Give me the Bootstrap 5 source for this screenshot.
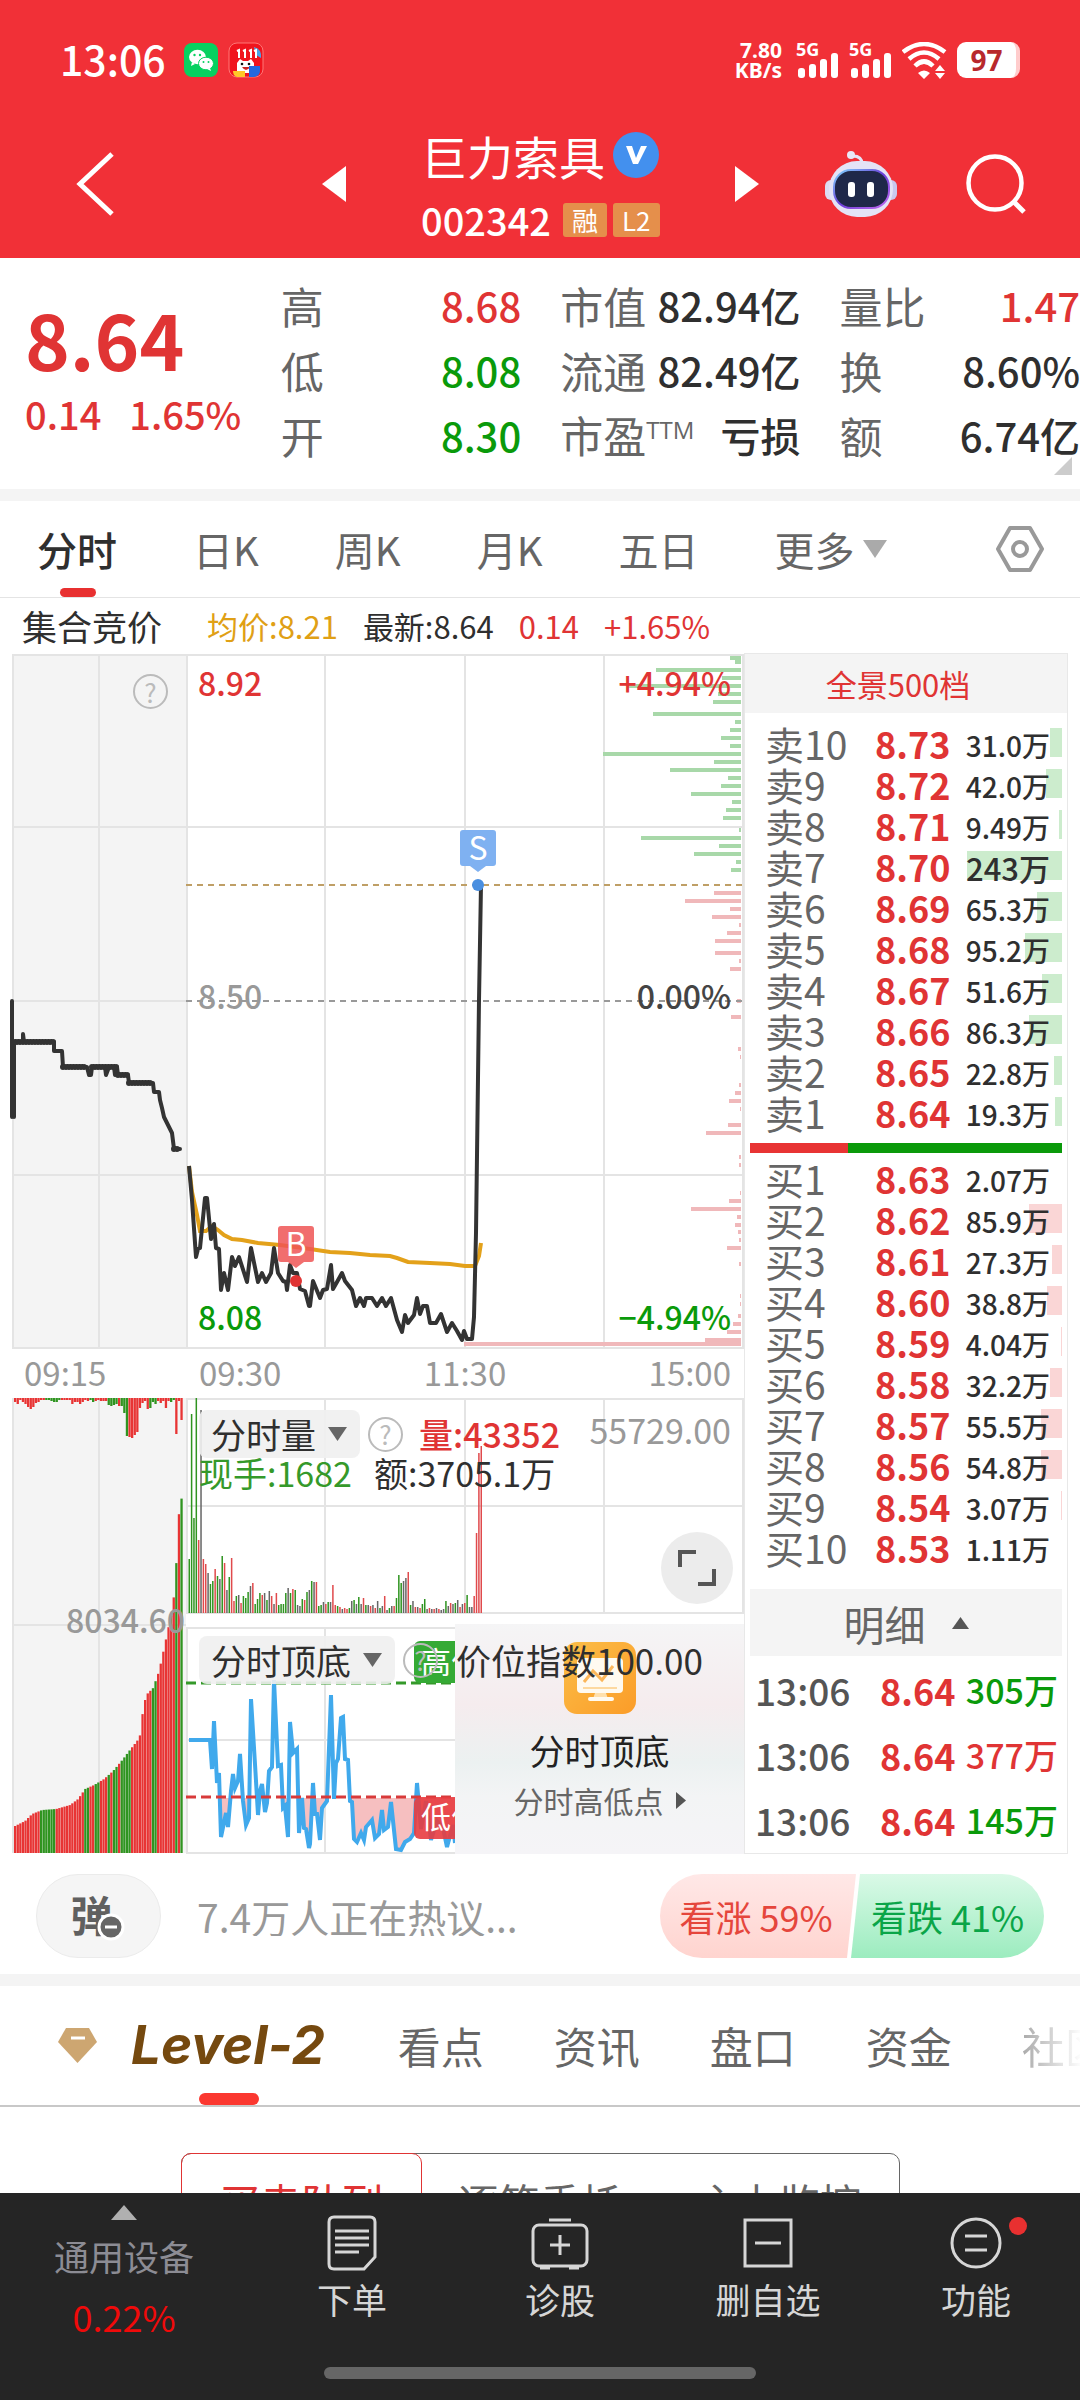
<!DOCTYPE html>
<html lang="zh-CN">
<head>
<meta charset="utf-8">
<meta name="viewport" content="width=device-width, initial-scale=1">
<title>巨力索具 002342</title>
<link rel="stylesheet" href="https://cdn.jsdelivr.net/npm/bootstrap@5.3.0/dist/css/bootstrap.min.css">
<style>
:root { --up:#e03434; --down:#0a9a0a; --ink:#2f2f2f; --mute:#666; --soft:#999; --panel:#f4f4f4; --rule:#e9e9e9; }
body { font-family:"Noto Sans CJK SC","Noto Sans",sans-serif; font-size:34px; line-height:40px; color:var(--ink); background:#fff; }
svg { display:block; flex:none; }
button { background:none; border:0; padding:0; color:inherit; }
a { color:inherit; text-decoration:none; }
.up { color:var(--up); } .down { color:var(--down); } .mute { color:var(--mute); } .soft { color:var(--soft); }
.band { height:12px; background:var(--panel); }

.top-red { background:#f13037; color:#fff; height:258px; }
.statusbar { height:120px; padding:0 60px; gap:10px; }
.clock { font-size:41px; font-weight:500; }
.net-rate { font:700 21px/20px "Noto Sans",sans-serif; text-align:right; margin-right:4px; }
.cell-signal { overflow:visible; }
.cell-signal text { font:700 18px "Noto Sans",sans-serif; }
.battery { width:63px; height:36px; border-radius:9px; background:#fff; color:#b8282c; font:700 28px/36px "Noto Sans",sans-serif; text-align:center; border-right:4px solid #fcc; }
.titlebar { height:138px; padding:0 0 10px 76px; }
.to-prev { margin-left:208px; } .title-block { margin-left:75px; width:241px; white-space:nowrap; } .to-next { margin-left:73px; } .to-bot { margin-left:66px; } .to-find { margin-left:69px; }
.stock-name { font-size:46px; line-height:54px; }
.stock-code { font-size:38px; line-height:40px; font-weight:500; margin-top:18px; }
.tag { background:#e58f4b; border-radius:3px; font-size:26px; font-weight:400; line-height:33px; height:34px; padding:0 9px; }
.tag-first { margin-left:12px; margin-right:6px; }

.quote { height:231px; padding-top:14px; }
.quote-main { flex:0 0 26%; padding-left:25px; }
.last-price { font-size:76px; line-height:92px; font-weight:700; margin-top:20px; }
.chg { font-size:38px; line-height:60px; gap:28px; font-weight:500; }
.stats { gap:39px; }
.stat { height:65px; }
.stat dt { font-size:43px; font-weight:400; color:var(--mute); white-space:nowrap; }
.stat dd { font-size:40px; font-weight:500; margin:0; white-space:nowrap; }
.stat sup { font:400 24px/24px "Open Sans",sans-serif; top:-14px; }
.corner { right:8px; bottom:14px; }

.periods { height:97px; padding:0 36px 0 37px; gap:76px; font-size:40px; color:var(--mute); border-bottom:1px solid #e4e4e4; }
.periods button { height:96px; position:relative; }
.periods .on { color:var(--ink); font-weight:500; }
.periods .on::after { content:""; position:absolute; left:23px; bottom:0; width:36px; height:9px; border-radius:5px; background:#e83030; }
.legend-row { height:56px; padding-left:22px; font-size:31px; gap:25px; }
.legend-row .auction { font-size:35px; margin-right:20px; }

.plots svg { width:100%; height:auto; }
.plots text { font-family:"Noto Sans CJK SC","Noto Sans",sans-serif; font-size:32px; }
.axis { height:49px; font-size:33px; color:var(--soft); }
.axis span { width:25%; line-height:44px; margin-bottom:3px; }
.inset-start { padding-left:13px; } .inset-end { padding-right:13px; }
.aux-left { flex:186 0 0; } .aux-right { flex:558 0 0; min-width:0; }
.grid-line { stroke:#e4e4e4; stroke-width:2; fill:none; }
.tool-row { left:13px; top:12px; right:13px; height:48px; }
.pick { background:rgba(240,240,240,.9); border-radius:8px; height:48px; padding:0 13px 0 12px; font-size:35px; gap:12px; }
.help { width:35px; height:35px; border:2px solid #bbb; border-radius:50%; color:#bbb; font-size:26px; line-height:30px; text-align:center; }
.help-auction { right:558px; top:20px; margin-right:18px; }
.detail-row { left:13px; top:55px; gap:22px; }
.expand { right:11px; bottom:10px; width:72px; height:72px; border-radius:50%; background:#ececec; }
.promo { right:0; top:2px; width:289px; bottom:0; padding-top:18px; color:#222; background:linear-gradient(#f5f5f6,#f5ecee 35%,#ecf1f1 60%,#f3f4f5 75%,#f5f4f7); }
.promo b { font-size:35px; line-height:42px; margin-top:15px; font-weight:400; }
.promo small { font-size:30px; line-height:40px; margin-top:9px; gap:12px; color:#666; }
.index-name { left:270px; top:14px; font-size:35px; z-index:2; }

.book { flex:0 0 324px; margin-right:12px; border:1px solid #e8e8e8; margin-top:-1px; }
.depth-link { height:59px; background:var(--panel); font-size:31px; width:100%; padding-right:16px; }
.ladder { width:100%; table-layout:fixed; border-collapse:collapse; }
.ladder td, .ladder th { padding:0; height:41px; line-height:38px; white-space:nowrap; }
.ladder th { width:130px; padding-left:20px; font-size:39px; font-weight:400; color:var(--mute); }
.ladder .px { width:90px; font-size:36px; font-weight:700; color:var(--up); }
.ladder .vol { position:relative; font-size:28px; line-height:34px; font-weight:500; text-align:right; padding-right:17px; padding-top:4px; }
.ladder .vol.short-num { font-size:31px; }
.ladder .vol span { position:relative; }
.ladder .fillbar { position:absolute; right:5px; top:6px; height:29px; background:#cceccd; }
.ladder.bids .fillbar { background:#fad6d6; }
.asks { margin-top:9px; }
.balance { height:10px; margin:11px 5px 4px 5px; }
.tick-toggle { height:67px; margin:22px 5px 0; background:var(--panel); font-size:41px; color:var(--mute); gap:26px; }
.ticks { width:100%; table-layout:fixed; }
.ticks td { height:65px; padding:3px 0 0; font-size:37px; white-space:nowrap; }
.ticks td:nth-child(1) { width:135px; padding-left:10px; color:#555; font-weight:500; }
.ticks td:nth-child(2) { width:80px; color:var(--up); font-size:36px; font-weight:700; }
.ticks td:nth-child(3) { font-size:34px; font-weight:500; text-align:right; padding-right:9px; }

.talk { height:120px; padding:4px 36px 0; }
.danmu { width:125px; height:84px; border-radius:42px; background:#f5f5f5; border:1px solid #ebebeb; font-size:42px; font-weight:700; color:#606060; position:relative; padding:0 14px 4px 0; }
.danmu svg { position:absolute; left:60px; top:38px; }
.talk-box { font-size:39px; color:#999; border:0; background:none; margin-left:36px; width:400px; min-width:0; padding:0; outline:0; }
.talk-box::placeholder { color:#999; opacity:1; }
.vote { height:84px; width:384px; font-size:36px; }
.vote button { position:relative; height:84px; white-space:nowrap; }
.bull { flex:194 0 0; color:#e5463c; background:linear-gradient(#ffe8e7,#ffd4cf); border-radius:42px 0 0 42px; clip-path:polygon(0 0,100% 0,calc(100% - 9px) 100%,0 100%); }
.vote .bull { padding-right:4px; }
.bear { flex:195 0 0; margin-left:-5px; color:#0aa548; background:linear-gradient(#daf9e7,#9cecbf); border-radius:0 42px 42px 0; clip-path:polygon(9px 0,100% 0,100% 100%,0 100%); }

.sections { height:121px; padding-left:57px; border-bottom:2px solid #c8c8c8; font-size:43px; color:var(--mute); overflow:hidden; white-space:nowrap; }
.sections a { margin-right:70px; line-height:117px; }
.sections .lv2 { font:italic 700 53px/119px Inter,sans-serif; color:#75490f; position:relative; margin-left:33px; margin-right:73px; }
.sections .lv2::after { content:""; position:absolute; left:68px; bottom:0; width:60px; height:12px; border-radius:6px; background:#fb3830; }
.sections .fade-tail { color:transparent; background:linear-gradient(90deg,#aaa,#fff 60px); background-clip:text; -webkit-background-clip:text; margin:0; }
.segments { width:719px; height:96px; margin:46px auto 0; border:1px solid #666; border-radius:10px; font-size:41px; color:var(--mute); }
.segments button { flex:1; }
.segments .on { color:var(--up); border:1px solid var(--up); border-radius:10px; margin:-1px; }

.dock { height:207px; background:#252525; color:#d6d6d6; font-size:35px; }
.dock-index { flex:248 0 0; color:#8c8c94; padding-top:12px; }
.dock-index b { font-weight:400; font-size:36px; color:#f00a0a; margin-top:20px; }
.dock-item { flex:208 0 0; padding-top:22px; position:relative; }
.dock-item span { margin-top:8px; }
.dot { position:absolute; right:53px; top:24px; width:18px; height:18px; border-radius:50%; background:#e83030; }
.home-line { position:absolute; left:30%; right:30%; bottom:21px; height:12px; border-radius:6px; background:#666; }
</style>
<script src="https://cdn.jsdelivr.net/npm/bootstrap@5.3.0/dist/js/bootstrap.bundle.min.js"></script>
</head>
<body>
<header class="top-red">
  <div class="statusbar d-flex align-items-center">
    <span class="clock me-2 pb-1">13:06</span>
    <svg width="34" height="34" viewBox="0 0 34 34"><rect width="34" height="34" rx="8" fill="#07d160"/><ellipse cx="13.500" cy="14" rx="8.500" ry="7.200" fill="#fff"/><path d="M8 19l-1 4 4-2z" fill="#fff"/><ellipse cx="22" cy="20.500" rx="7.500" ry="6.300" fill="#fff" stroke="#07d160"/><path d="M26 25l1 3-4-2z" fill="#fff"/><g fill="#07d160"><circle cx="10.500" cy="12" r="1.200"/><circle cx="16" cy="12" r="1.200"/><circle cx="19.500" cy="19" r="1"/><circle cx="24.500" cy="19" r="1"/></g></svg>
    <svg width="36" height="36" viewBox="-1 -1 36 36"><rect width="34" height="34" rx="8" fill="#f0141e" stroke="#f77"/><path d="M25 4q8 2 7 11l-5-3z" fill="#48a4e8"/><path d="M8 8l2-1v8M14 8l2-1v8M20 8l2-1v8M25 8l2-1v8" stroke="#fff" stroke-width="2" fill="none"/><path d="M8 30V20l3-4 3 2h5l3-2 3 4v10z" fill="#fff"/><circle cx="13" cy="21" r="1.300" fill="#111"/><circle cx="20" cy="21" r="1.300" fill="#111"/><path d="M13 24h8q-4 6-8 0z" fill="#c22"/><path d="M4 28h12v6H8q-4-1-4-6z" fill="#ffc928"/><path d="M20 23h11v5q0 5-6 6h-5z" fill="#2368e0"/></svg>
    <div class="ms-auto net-rate">7.80<br>KB/s</div>
    <svg class="cell-signal" width="43" height="36" viewBox="0 0 43 36" fill="#fff"><text x="0" y="14">5G</text><rect x="2" y="26" width="7" height="10" rx="3"/><rect x="13" y="22" width="7" height="14" rx="3"/><rect x="24" y="17" width="7" height="19" rx="3"/><rect x="35" y="11" width="7" height="25" rx="3"/></svg>
    <svg class="cell-signal" width="43" height="36" viewBox="0 0 43 36" fill="#fff"><text x="0" y="14">5G</text><rect x="2" y="26" width="7" height="10" rx="3"/><rect x="13" y="22" width="7" height="14" rx="3"/><rect x="24" y="17" width="7" height="19" rx="3"/><rect x="35" y="11" width="7" height="25" rx="3"/></svg>
    <svg width="45" height="37" viewBox="0 0 45 37"><g fill="none" stroke="#fff" stroke-width="4.500"><path d="M1 10Q22-6 43 10"/><path d="M7 17Q22 4 37 17"/><path d="M13 24Q22 15 31 24"/></g><path d="M16 31q6-5 12 0l-6 6zM33 29l5-6 5 6zM33 31h10l-5 6z" fill="#fff"/></svg>
    <div class="battery">97</div>
  </div>
  <div class="titlebar d-flex align-items-center">
    <button type="button" aria-label="返回"><svg width="38" height="66" viewBox="0 0 38 66"><path d="M36 3L4 33l32 30" fill="none" stroke="#fff" stroke-width="5"/></svg></button>
    <button type="button" class="to-prev" aria-label="上一只"><svg width="24" height="36" viewBox="0 0 24 36"><path d="M24 0v36L0 18z" fill="#fff"/></svg></button>
    <div class="title-block">
      <div class="d-flex align-items-center stock-name">巨力索具<svg class="ms-2" width="46" height="46" viewBox="0 0 46 46"><circle cx="23" cy="23" r="23" fill="#4390ee"/><path d="M13 14l6 0 4 12 5-12h6l-9 18h-5z" fill="#fff"/></svg></div>
      <div class="d-flex align-items-center stock-code">002342<span class="tag tag-first">融</span><span class="tag">L2</span></div>
    </div>
    <button type="button" class="to-next" aria-label="下一只"><svg width="24" height="36" viewBox="0 0 24 36"><path d="M0 0v36l24-18z" fill="#fff"/></svg></button>
    <button type="button" class="to-bot" aria-label="智能助手"><svg width="72" height="66" viewBox="0 0 72 66"><defs><linearGradient id="face" x1="0" y1="0" x2="1" y2="1"><stop offset="0" stop-color="#7fd8ff"/><stop offset=".5" stop-color="#6b3fd8"/><stop offset="1" stop-color="#c46af0"/></linearGradient></defs><path d="M37 13Q37 5 28 5" fill="none" stroke="#e6e4f6" stroke-width="3"/><circle cx="26" cy="4" r="4" fill="#e9e8f7"/><rect y="29" width="16" height="20" rx="6" fill="#dcdcf2"/><rect x="56" y="29" width="16" height="20" rx="6" fill="#c9c8ee"/><rect x="4" y="10" width="64" height="56" rx="28" fill="#e4e3f6"/><rect x="9" y="19" width="55" height="38" rx="17" fill="#1f2849" stroke="url(#face)" stroke-width="2"/><rect x="23" y="31" width="7" height="15" rx="3" fill="#fff"/><rect x="42" y="31" width="7" height="15" rx="3" fill="#fff"/></svg></button>
    <button type="button" class="to-find" aria-label="搜索"><svg width="60" height="60" viewBox="0 0 60 60"><circle cx="29" cy="29" r="26.500" fill="none" stroke="#fff" stroke-width="4.500"/><path d="M47 47l11 11" stroke="#fff" stroke-width="5"/></svg></button>
  </div>
</header>

<section class="quote d-flex position-relative">
  <div class="quote-main">
    <div class="last-price up">8.64</div>
    <div class="chg up d-flex"><span>0.14</span><span>1.65%</span></div>
  </div>
  <div class="stats d-flex flex-grow-1">
    <dl class="flex-fill w-100 m-0">
      <div class="stat d-flex align-items-center justify-content-between"><dt>高</dt><dd class="up">8.68</dd></div>
      <div class="stat d-flex align-items-center justify-content-between"><dt>低</dt><dd class="down">8.08</dd></div>
      <div class="stat d-flex align-items-center justify-content-between"><dt>开</dt><dd class="down">8.30</dd></div>
    </dl>
    <dl class="flex-fill w-100 m-0">
      <div class="stat d-flex align-items-center justify-content-between"><dt>市值</dt><dd>82.94亿</dd></div>
      <div class="stat d-flex align-items-center justify-content-between"><dt>流通</dt><dd>82.49亿</dd></div>
      <div class="stat d-flex align-items-center justify-content-between"><dt>市盈<sup>TTM</sup></dt><dd>亏损</dd></div>
    </dl>
    <dl class="flex-fill w-100 m-0">
      <div class="stat d-flex align-items-center justify-content-between"><dt>量比</dt><dd class="up">1.47</dd></div>
      <div class="stat d-flex align-items-center justify-content-between"><dt>换</dt><dd>8.60%</dd></div>
      <div class="stat d-flex align-items-center justify-content-between"><dt>额</dt><dd>6.74亿</dd></div>
    </dl>
  </div>
  <svg class="corner position-absolute" width="18" height="18"><path d="M18 0v18H0z" fill="#ccc"/></svg>
</section>
<div class="band"></div>

<nav class="periods d-flex align-items-center">
  <button type="button" class="on">分时</button><button type="button">日K</button><button type="button">周K</button><button type="button">月K</button><button type="button">五日</button>
  <button type="button" class="d-flex align-items-center gap-2">更多<svg width="24" height="20"><path d="M0 1h24L12 19z" fill="#aaa"/></svg></button>
  <button type="button" class="ms-auto" aria-label="设置"><svg width="48" height="48" viewBox="0 0 48 48"><path d="M14 3h20L46 24 34 45H14L2 24z" fill="none" stroke="#999" stroke-width="4" stroke-linejoin="round"/><circle cx="24" cy="24" r="7" fill="none" stroke="#999" stroke-width="4"/></svg></button>
</nav>
<div class="legend-row d-flex align-items-center">
  <span class="auction">集合竞价</span><span style="color:#e0a015">均价:8.21</span><span>最新:8.64</span><span class="up">0.14</span><span class="up">+1.65%</span>
</div>

<main class="d-flex">
  <div class="plots flex-fill">
    <div class="position-relative">
      <svg id="minute" viewBox="0 654 744 695">
        <rect x="12" y="654" width="174" height="694" fill="#f4f4f4"/>
        <path class="grid-line" d="M12 655H744M12 827H744M12 1001H186M12 1175H744M12 1348H744M13 654V1348M99 654V1348M187 654V1348M325 654V1348M465 654V1348M604 654V1348M743 654V1348"/>
        <g id="depth"></g>
        <path d="M186 885H744" stroke="#bf9f66" stroke-width="2" stroke-dasharray="6 5"/>
        <path d="M186 1001H744" stroke="#999" stroke-width="2" stroke-dasharray="6 5"/>
        <g font-weight="500"><text x="198" y="696" fill="#e03434">8.92</text><text x="731" y="696" fill="#e03434" text-anchor="end">+4.94%</text>
        <text x="198" y="1009" fill="#999">8.50</text><text x="731" y="1009" fill="#444" text-anchor="end">0.00%</text>
        <text x="198" y="1330" fill="#0a9a0a">8.08</text><text x="731" y="1330" fill="#0a9a0a" text-anchor="end">−4.94%</text></g>
        <path d="M12 1001V1117M14 1117V1042H23V1034L24 1042H54V1051H62L63 1067H87L89 1075H91L92 1067H105L106 1075L109 1067H114L115 1075L117 1067L118 1075H128L129 1083H153L154 1092H159L160 1100L162 1108L164 1117L168 1125L172 1133L174 1149H180" fill="none" stroke="#333" stroke-width="4" stroke-linejoin="round" stroke-linecap="round"/>
        <path d="M14 1042H54M63 1067H87M92 1067H117M118 1075H128M129 1083H153M174 1149H180" fill="none" stroke="#333" stroke-width="6" stroke-linecap="round" stroke-dasharray="0 3"/>
        <polyline fill="none" stroke="#e3a11a" stroke-width="4" points="189,1166 192,1192 197,1215 200,1231 206,1231 212,1226 218,1230 224,1235 232,1239 242,1240 258,1243 280,1245 310,1249 330,1252 350,1253 370,1255 390,1256 397,1258 408,1262 430,1263 450,1264 465,1266 475,1266 479,1256 481,1243"/>
        <polyline fill="none" stroke="#333" stroke-width="4" stroke-linejoin="round" points="189,1166 192,1200 196,1257 198,1249 200,1248 205,1198 207,1198 211,1239 214,1224 216,1248 219,1249 221,1290 224,1273 228,1290 232,1257 235,1266 239,1257 247,1282 251,1248 258,1282 262,1273 266,1282 271,1273 274,1248 278,1273 283,1281 286,1282 287,1290 290,1265 293,1273 297,1273 300,1289 305,1291 309,1306 310,1306 313,1281 320,1298 323,1290 327,1289 331,1265 333,1289 337,1282 342,1273 345,1281 352,1290 356,1306 360,1298 364,1306 366,1298 372,1298 377,1306 382,1298 386,1306 391,1298 397,1320 402,1332 405,1315 408,1323 414,1315 417,1298 420,1314 423,1306 427,1306 430,1323 436,1323 441,1314 447,1332 452,1323 457,1331 462,1340 464,1331 467,1339 472,1339 474,1317 476,1233 479,1000 481,885"/>
        <circle cx="478" cy="885" r="6" fill="#4a8fe0"/><circle cx="296" cy="1281" r="6" fill="#e03434"/>
        <path d="M463 830h30q3 0 3 3v30q0 3-3 3h-7l-8 6-8-6h-7q-3 0-3-3v-30q0-3 3-3z" fill="#7fb1f1"/><text x="478" y="860" fill="#fff" text-anchor="middle">S</text>
        <path d="M281 1226h30q3 0 3 3v30q0 3-3 3h-7l-8 6-8-6h-7q-3 0-3-3v-30q0-3 3-3z" fill="#ee5555" opacity=".85"/><text x="296" y="1256" fill="#fff" text-anchor="middle">B</text>
      </svg>
      <button type="button" class="help help-auction position-absolute" aria-label="集合竞价说明">?</button>
    </div>
    <div class="axis d-flex align-items-center"><span class="ps-4">09:15</span><span class="inset-start">09:30</span><span class="text-center">11:30</span><span class="text-end inset-end">15:00</span></div>
    <div class="d-flex">
      <div class="aux-left">
        <svg viewBox="0 1397 186 456">
          <rect x="12" y="1397" width="174" height="455" fill="#f4f4f4"/>
          <path class="grid-line" d="M13 1397V1852M99 1397V1852M12 1624H186"/>
          <g id="auctionBars"></g>
          <text x="185" y="1632" fill="#999" text-anchor="end" font-weight="500">8034.60</text>
        </svg>
      </div>
      <div class="aux-right">
        <div class="position-relative">
          <svg viewBox="186 1397 558 216">
            <path class="grid-line" d="M186 1398H744M186 1505H744M186 1612H744M187 1397V1612M325 1397V1612M465 1397V1612M604 1397V1612M743 1397V1612"/>
            <g id="volumeBars"></g>
          </svg>
          <div class="tool-row position-absolute d-flex align-items-center">
            <button type="button" class="pick d-flex align-items-center">分时量<svg style="width:19px" width="19" height="14" viewBox="0 0 19 14"><path d="M0 0h19L9.500 14z" fill="#666"/></svg></button>
            <button type="button" class="help mx-2" aria-label="分时量说明">?</button>
            <span class="up fw-medium ms-2">量:43352</span><span class="soft ms-auto pb-2">55729.00</span>
          </div>
          <div class="detail-row position-absolute d-flex"><span style="color:#35992a">现手:1682</span><span>额:3705.1万</span></div>
          <button type="button" class="expand position-absolute d-flex align-items-center justify-content-center" aria-label="全屏"><svg style="width:38px" width="38" height="38" viewBox="0 0 38 38"><path d="M2 18V3h16M36 20v15H20" fill="none" stroke="#555" stroke-width="4"/></svg></button>
        </div>
        <div class="position-relative">
          <svg viewBox="186 1613 558 240">
            <defs><clipPath id="low"><rect x="186" y="1797" width="269" height="60"/></clipPath><clipPath id="shown"><rect x="186" y="1620" width="269" height="240"/></clipPath></defs>
            <path class="grid-line" d="M186 1627H744M186 1739H744M186 1852H744M187 1626V1852M325 1626V1852M743 1626V1852"/>
            <polygon id="lowFill" fill="#f6bfc0" clip-path="url(#low)"/>
            <polyline id="peakLine" fill="none" stroke="#40a9ec" stroke-width="4"/>
            <g clip-path="url(#shown)">
              <path d="M186 1682H455" stroke="#35992a" stroke-width="3" stroke-dasharray="10 5"/>
              <path d="M186 1796H455" stroke="#d83a3a" stroke-width="3" stroke-dasharray="10 5"/>
              <rect x="414" y="1640" width="60" height="42" rx="6" fill="#35aa35"/><text x="421" y="1672" fill="#fff" style="font-size:30px">高价</text>
              <rect x="414" y="1796" width="60" height="42" rx="6" fill="#e83c40" opacity=".9"/><text x="421" y="1827" fill="#fff" style="font-size:30px">低价</text>
            </g>
          </svg>
          <div class="tool-row position-absolute d-flex align-items-center mt-2 pt-1">
            <button type="button" class="pick d-flex align-items-center">分时顶底<svg style="width:19px" width="19" height="14" viewBox="0 0 19 14"><path d="M0 0h19L9.500 14z" fill="#666"/></svg></button>
            <button type="button" class="help mx-2" aria-label="分时顶底说明">?</button>
          </div>
          <a href="#peak" class="promo position-absolute d-flex flex-column align-items-center mt-2">
            <svg style="width:72px" width="72" height="72" viewBox="0 0 72 72"><defs><linearGradient id="or" x1="0" y1="0" x2="1" y2="1"><stop offset="0" stop-color="#fbbe48"/><stop offset="1" stop-color="#fb9c28"/></linearGradient></defs><rect width="72" height="72" rx="13" fill="url(#or)"/><rect x="13" y="16" width="46" height="35" rx="4" fill="#fffaf0"/><path d="M31 51h11l2 6H29z" fill="#ffe0ac"/><rect x="24" y="55" width="26" height="4" rx="2" fill="#fffaf0"/><path d="M20 40l9-11 9 9 11-14" fill="none" stroke="#fbb65a" stroke-width="3"/><path d="M19 46h34" stroke="#fdd9a0" stroke-width="2"/></svg>
            <b>分时顶底</b><small class="d-flex align-items-center">分时高低点<svg style="width:10px" width="10" height="17" viewBox="0 0 10 17"><path d="M0 0l10 8.500L0 17z" fill="#555"/></svg></small>
          </a>
          <span class="index-name position-absolute mt-2 pt-1">价位指数100.00</span>
        </div>
      </div>
    </div>
  </div>

  <aside class="book">
    <button type="button" class="depth-link up">全景500档</button>
    <table class="ladder asks"><tbody id="asks"></tbody></table>
    <div class="balance d-flex"><div style="width:31.4%;background:#e83434"></div><div style="width:68.6%;background:#0a9a0a"></div></div>
    <table class="ladder bids"><tbody id="bids"></tbody></table>
    <div class="d-flex"><button type="button" class="tick-toggle flex-fill d-flex align-items-center justify-content-center">明细<svg width="17" height="12"><path d="M0 12h17L8.500 0z" fill="#555"/></svg></button></div>
    <table class="ticks"><tbody>
      <tr><td>13:06</td><td>8.64</td><td class="down">305万</td></tr>
      <tr><td>13:06</td><td>8.64</td><td class="up">377万</td></tr>
      <tr><td>13:06</td><td>8.64</td><td class="down">145万</td></tr>
    </tbody></table>
  </aside>
</main>

<section class="talk d-flex align-items-center">
  <button type="button" class="danmu" aria-label="弹幕">弹<svg width="28" height="28" viewBox="0 0 28 28"><circle cx="14" cy="14" r="12" fill="#666" stroke="#fff" stroke-width="3"/><path d="M8 14h12" stroke="#fff" stroke-width="3"/></svg></button>
  <input class="talk-box" type="text" aria-label="参与讨论" placeholder="7.4万人正在热议...">
  <div class="vote d-flex ms-auto"><button type="button" class="bull">看涨 59%</button><button type="button" class="bear">看跌 41%</button></div>
</section>
<div class="band"></div>

<nav class="sections d-flex align-items-center">
  <svg width="41" height="37" viewBox="0 0 41 37"><path d="M9 1h23l8 14L20.500 36 1 15z" fill="#cda671"/><path d="M14 11h14" stroke="#fff" stroke-width="3"/></svg>
  <a href="#lv2" class="lv2">Level-2</a><a href="#view">看点</a><a href="#news">资讯</a><a href="#book">盘口</a><a href="#fund">资金</a><a href="#club" class="fade-tail">社区</a>
</nav>
<div class="segments d-flex"><button type="button" class="on">买卖队列</button><button type="button">逐笔委托</button><button type="button">主力监控</button></div>

<nav class="dock fixed-bottom d-flex">
  <button type="button" class="dock-index d-flex flex-column align-items-center"><svg width="26" height="15"><path d="M0 15h26L13 0z" fill="#b0b0b0"/></svg><span class="mt-3">通用设备</span><b>0.22%</b></button>
  <button type="button" class="dock-item d-flex flex-column align-items-center"><svg width="60" height="56" viewBox="0 0 60 56"><path d="M12 2h36q5 0 5 5v35L42 54H12q-5 0-5-5V7q0-5 5-5zM13 16h34M13 23h34M13 30h34M13 37h24" fill="none" stroke="#d6d6d6" stroke-width="3"/></svg><span>下单</span></button>
  <button type="button" class="dock-item d-flex flex-column align-items-center"><svg width="60" height="56" viewBox="0 0 60 56"><rect x="3" y="10" width="54" height="41" rx="6" fill="none" stroke="#d6d6d6" stroke-width="3"/><path d="M19 5h22M30 20v20M20 30h20M10 53h10M39 53h10" stroke="#d6d6d6" stroke-width="3"/></svg><span>诊股</span></button>
  <button type="button" class="dock-item d-flex flex-column align-items-center"><svg width="60" height="56" viewBox="0 0 60 56"><rect x="7" y="5" width="46" height="46" fill="none" stroke="#d6d6d6" stroke-width="3"/><path d="M17 28h26" stroke="#d6d6d6" stroke-width="3"/></svg><span>删自选</span></button>
  <button type="button" class="dock-item d-flex flex-column align-items-center"><svg width="60" height="56" viewBox="0 0 60 56"><circle cx="30" cy="28" r="24" fill="none" stroke="#d6d6d6" stroke-width="3"/><path d="M19 21h22M19 35h22" stroke="#d6d6d6" stroke-width="3"/></svg><span>功能</span><i class="dot"></i></button>
  <div class="home-line"></div>
</nav>

<script>
const RED = '#e83434', GREEN = '#2f9420', GRAY = '#666';
const put = (id, html) => { document.getElementById(id).innerHTML = html; };
const bar = (x, y, w, h, fill) => `<rect x="${x}" y="${y}" width="${w}" height="${h}" fill="${fill}"/>`;

// order book: label, price, volume, bar length
const rows = list => list.map(([n, p, v, w]) => `<tr><th scope="row">${n}</th><td class="px">${p}</td><td class="vol${v.includes('.') ? '' : ' short-num'}"><i class="fillbar" style="width:${w}px"></i><span>${v}</span></td></tr>`).join('');
put('asks', rows([['卖10','8.73','31.0万',12],['卖9','8.72','42.0万',16],['卖8','8.71','9.49万',3],['卖7','8.70','243万',95],['卖6','8.69','65.3万',25],['卖5','8.68','95.2万',37],['卖4','8.67','51.6万',20],['卖3','8.66','86.3万',33],['卖2','8.65','22.8万',8],['卖1','8.64','19.3万',7]]));
put('bids', rows([['买1','8.63','2.07万',0],['买2','8.62','85.9万',33],['买3','8.61','27.3万',10],['买4','8.60','38.8万',15],['买5','8.59','4.04万',1],['买6','8.58','32.2万',12],['买7','8.57','55.5万',21],['买8','8.56','54.8万',21],['买9','8.54','3.07万',1],['买10','8.53','1.11万',0]]));

// resting orders by price level
const sell = {658:11,662:6,670:85,678:19,686:114,694:23,702:28,714:88,722:6,730:11,738:20,746:11,754:138,762:27,770:71,778:13,786:20,794:50,802:9,810:15,818:18,830:2,838:100,846:22,854:47,862:5,870:10};
const buy = {893:27,901:56,909:11,917:29,925:2,933:14,941:26,953:26,961:2,969:11,1001:4,1017:10,1049:3,1057:1,1085:2,1093:6,1101:12,1109:1,1125:13,1133:35,1157:2,1165:2,1193:1,1201:12,1209:50,1217:4,1225:6,1232:3,1240:2,1248:14,1264:2,1296:1,1304:1,1316:3,1324:8,1332:14,1340:36,1344:277};
const level = (set, fill) => Object.entries(set).map(([y, n]) => bar(741 - n, y - 2, n, 4, fill)).join('');
put('depth', level(sell, '#a8d8a9') + level(buy, '#f0b8ba'));

// call auction: matched volume from the floor, unmatched from the ceiling
const curve = [[14,1825],[24,1820],[31,1813],[41,1809],[55,1808],[69,1804],[77,1798],[84,1788],[93,1784],[103,1778],[112,1770],[122,1758],[128,1750],[136,1740],[140,1732],[142,1705],[146,1693],[152,1687],[158,1670],[163,1647],[167,1628],[171,1610],[173,1593],[175,1567],[177,1518],[181,1494]];
const at = x => { let k = 1; while (k < curve.length - 1 && curve[k][0] < x) k++; const [a, b] = curve[k - 1], [c, d] = curve[k]; return b + (d - b) * (x - a) / (c - a); };
const tone = 'rrrrrrrrrrggggggrrrrrrrrrrrggrrggrrrgrggrggggrrrrrrrrggrrrrrrrgrgg';
const hang = [4,6,2,4,6,9,11,9,5,4,2,2,2,2,3,4,4,2,2,2,2,2,6,4,4,6,4,2,3,2,4,3,2,3,3,3,7,8,7,6,8,8,15,38,39,40,37,34,10,5,3,11,10,4,6,3,5,3,10,3,4,2,36,3,22,22];
const hangTone = 'rrrrrrrrrrrrggggggrrrrrrrrrrrggrrrrrggggrgggrrrrrrrrgggrrrrrggrrrggg';
let a = '';
for (let i = 0; i < 65; i++) { const x = 14 + 2.6 * i, y = at(x); a += bar(x, y, 2.3, 1852 - y, tone[i] === 'g' ? GREEN : RED) + bar(x, 1397, 2.3, hang[i], hangTone[i] === 'g' ? GREEN : RED); }
put('auctionBars', a);

// minute volume
const vol = '54g 199g 95g 215g 73r 203x 54r 49r 40x 29g 32g 44r 37g 34x 57g 50r 23x 36g 55r 12r 17g 18x 10r 17g 15g 21g 27x 30r 9g 14g 20g 18r 20x 13g 22x 17r 9x 20r 8g 9g 9g 20g 25x 20g 24r 23g 8x 7x 14g 13r 21g 23x 32g 31x 31r 7g 8g 11x 9r 11g 11x 28r 8r 7g 6r 4x 5r 4r 5g 12x 13g 9x 16g 9x 15r 8g 8x 7r 8x 5r 12x 5g 7x 17r 3x 5g 7x 7r 15g 38g 30g 32x 35x 41r 8g 12x 6r 6x 5r 9g 14g 4x 5r 4x 4r 5x 4r 3x 4x 12g 7x 10r 9x 10g 13x 6r 9x 10r 18g 6x 6x 17r 80r 160r 167r'.split(' ');
const step = 292 / (vol.length - 1);
put('volumeBars', vol.map((v, i) => { const h = parseInt(v), c = {g:'#2f9420', r:'#e04a4c', x:GRAY}[v.slice(-1)]; return bar(188.5 + i * step, 1612 - h, 1.5, h, c); }).join(''));

// intraday peak / trough index
const peak = '189,1739 210,1739 212,1768 214,1720 217,1782 219,1772 221,1836 226,1812 228,1826 231,1790 233,1773 235,1787 238,1780 240,1753 243,1800 246,1824 249,1817 251,1698 255,1763 258,1814 260,1790 262,1783 265,1811 267,1802 269,1770 272,1766 274,1679 278,1765 281,1764 283,1807 285,1805 288,1836 290,1721 293,1752 297,1748 299,1832 302,1797 304,1827 306,1828 309,1847 310,1843 313,1782 315,1813 317,1813 320,1839 322,1807 327,1800 331,1694 334,1798 336,1762 338,1758 341,1717 343,1716 345,1758 348,1759 350,1800 352,1801 354,1838 357,1841 361,1832 364,1839 366,1826 372,1819 375,1837 379,1833 382,1809 384,1829 388,1826 391,1801 396,1848 401,1849 405,1841 410,1838 414,1832 417,1782 421,1828 426,1800 431,1839 437,1820 443,1827 447,1846 453,1824 455,1842';
document.getElementById('peakLine').setAttribute('points', peak);
document.getElementById('lowFill').setAttribute('points', '189,1739 ' + peak + ' 455,1739');
</script>
</body>
</html>
